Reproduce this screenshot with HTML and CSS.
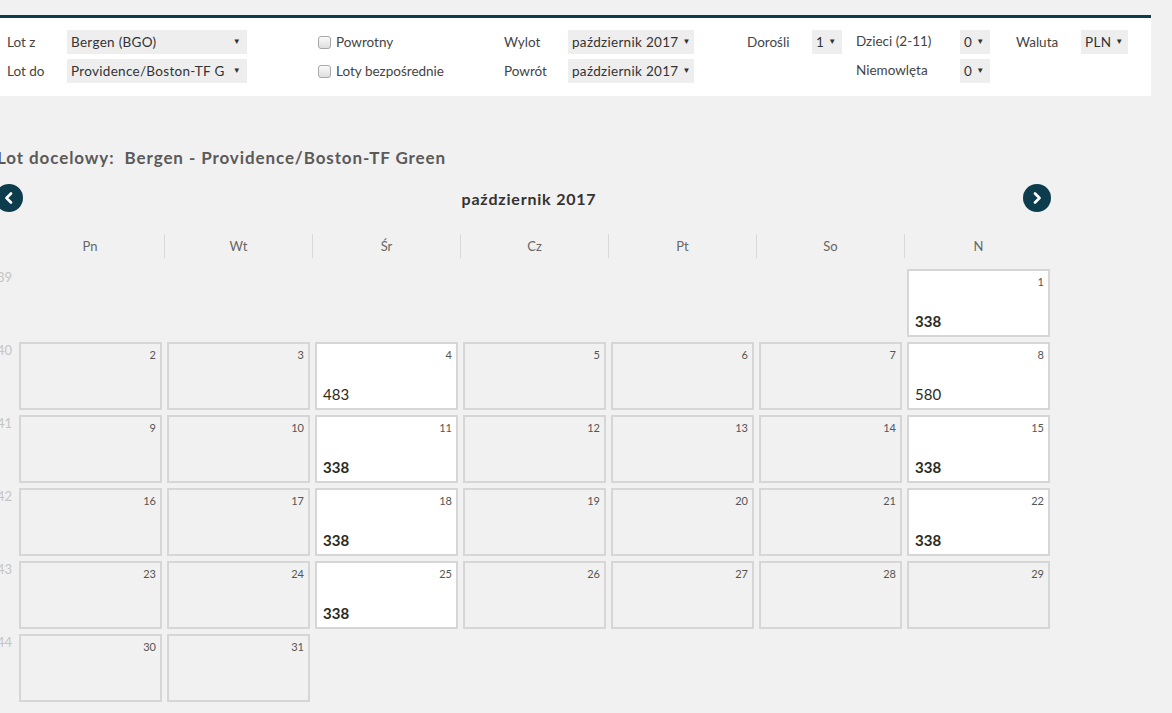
FILE: index.html
```html
<!DOCTYPE html>
<html lang="pl">
<head>
    <meta charset="UTF-8">
    <meta name="viewport" content="width=device-width, initial-scale=1.0">
    <title>Kalendarz lotów</title>
    <link rel="stylesheet" href="styles.css">
</head>
<body>
    <div class="searchbar">
        <div class="form-grid">
            <div class="lbl">Lot z</div>
            <div class="cell"><div class="sel w-from"><span>Bergen (BGO)</span><span class="caret">▼</span></div></div>
            <div class="cell"><label class="chk"><span class="box"></span>Powrotny</label></div>
            <div class="lbl">Wylot</div>
            <div class="cell"><div class="sel w-month"><span>październik 2017</span><span class="caret">▼</span></div></div>
            <div class="lbl">Dorośli</div>
            <div class="cell"><div class="sel w-num"><span>1</span><span class="caret">▼</span></div></div>
            <div class="lbl up">Dzieci (2-11)</div>
            <div class="cell"><div class="sel w-num"><span>0</span><span class="caret">▼</span></div></div>
            <div class="lbl">Waluta</div>
            <div class="cell"><div class="sel w-cur"><span>PLN</span><span class="caret">▼</span></div></div>

            <div class="lbl">Lot do</div>
            <div class="cell"><div class="sel w-from"><span>Providence/Boston-TF G</span><span class="caret">▼</span></div></div>
            <div class="cell"><label class="chk"><span class="box"></span>Loty bezpośrednie</label></div>
            <div class="lbl">Powrót</div>
            <div class="cell"><div class="sel w-month"><span>październik 2017</span><span class="caret">▼</span></div></div>
            <div class="lbl"></div>
            <div class="cell"></div>
            <div class="lbl up">Niemowlęta</div>
            <div class="cell"><div class="sel w-num"><span>0</span><span class="caret">▼</span></div></div>
            <div class="lbl"></div>
            <div class="cell"></div>
        </div>
    </div>

    <div class="calendar">
        <h2 class="route">Lot docelowy:&nbsp; Bergen - Providence/Boston-TF Green</h2>

        <div class="nav">
            <button class="arrow" aria-label="Poprzedni miesiąc">
                <svg width="12" height="12" viewBox="0 0 12 12"><path d="M8 1.5 L3.5 6 L8 10.5" fill="none" stroke="#fff" stroke-width="2.6" stroke-linecap="round" stroke-linejoin="round"/></svg>
            </button>
            <div class="month">październik 2017</div>
            <button class="arrow" aria-label="Następny miesiąc">
                <svg width="12" height="12" viewBox="0 0 12 12"><path d="M4 1.5 L8.5 6 L4 10.5" fill="none" stroke="#fff" stroke-width="2.6" stroke-linecap="round" stroke-linejoin="round"/></svg>
            </button>
        </div>

        <div class="days">
            <div>Pn</div><div>Wt</div><div>Śr</div><div>Cz</div><div>Pt</div><div>So</div><div>N</div>
        </div>

        <div class="grid" id="grid"></div>
    </div>

    <script>
        // prices for days with flights, bold = cheapest
        let prices = {
            1: ['338', true], 4: ['483', false], 8: ['580', false],
            11: ['338', true], 15: ['338', true], 18: ['338', true],
            22: ['338', true], 25: ['338', true]
        };
        let grid = document.getElementById('grid');
        let html = '';
        let day = 1;
        let offset = 6; // 1 October 2017 is a Sunday
        for (let w = 39; w <= 44; w++) {
            html += `<div class="week">${w}</div>`;
            for (let d = 0; d < 7; d++) {
                let pos = (w - 39) * 7 + d;
                if (pos < offset || day > 31) {
                    html += '<div class="empty"></div>';
                    continue;
                }
                let p = prices[day];
                let cls = p ? 'day on' : 'day';
                let price = p ? `<span class="price${p[1] ? ' best' : ''}">${p[0]}</span>` : '';
                html += `<div class="${cls}"><span class="num">${day}</span>${price}</div>`;
                day++;
            }
        }
        grid.innerHTML = html;
    </script>
</body>
</html>
```

FILE: styles.css
```css
body{
    margin: 0;
    background-color: #f1f1f1;
    font-family: Lato, "Noto Sans", sans-serif;
    color: #444;
}
.searchbar{
    margin-top: 15px;
    width: 1151px;
    background-color: #fff;
    border-top: 3px solid #0d3c4c;
    padding: 12px 0 13px 7px;
    box-sizing: border-box;
}
.form-grid{
    display: grid;
    grid-template-columns: 60px 251px 186px 64px 179px 65px 44px 104px 56px 65px auto;
    grid-template-rows: 24px 24px;
    row-gap: 5px;
    align-items: center;
}
.lbl{
    font-size: 13.5px;
    color: #444;
}
.lbl.up{
    align-self: start;
    padding-top: 3px;
}
.sel{
    display: flex;
    align-items: center;
    justify-content: space-between;
    height: 24px;
    padding: 0 6px 0 4px;
    box-sizing: border-box;
    background-color: #eee;
    font-size: 13.5px;
    letter-spacing: 0.3px;
    color: #333;
    white-space: nowrap;
    overflow: hidden;
}
.caret{
    font-size: 8px;
    margin-left: 4px;
    position: relative;
    top: -1px;
}
.w-from{ width: 180px; }
.w-month{ width: 126px; }
.w-num{ width: 30px; }
.w-cur{ width: 47px; }
.chk{
    display: flex;
    align-items: center;
    font-size: 13.5px;
    color: #444;
}
.box{
    width: 11px;
    height: 11px;
    margin-right: 5px;
    border: 1px solid #a8a8a8;
    border-radius: 3px;
    background: linear-gradient(#fafafa, #dedede);
}

.calendar{
    margin-left: -10px;
    width: 1066px;
}
.route{
    margin: 51px 0 0 7px;
    font-size: 17px;
    font-weight: 700;
    color: #5a5a5a;
    letter-spacing: 0.9px;
}
.nav{
    display: flex;
    align-items: center;
    justify-content: space-between;
    width: 1056px;
    margin: 16px 0 0 5px;
}
.arrow{
    width: 28px;
    height: 28px;
    border: 0;
    border-radius: 50%;
    padding: 0;
    background-color: #0d3c4c;
    display: flex;
    align-items: center;
    justify-content: center;
    cursor: pointer;
}
.month{
    flex: 1;
    text-align: center;
    padding-left: 12px;
    font-size: 16px;
    font-weight: 700;
    letter-spacing: 0.8px;
    color: #333;
}
.days{
    display: flex;
    margin: 22px 0 0 26px;
}
.days div{
    width: 148px;
    height: 24px;
    line-height: 24px;
    text-align: center;
    font-size: 13px;
    color: #666;
    box-sizing: border-box;
}
.days div + div{
    border-left: 1px solid #d8d8d8;
}
.grid{
    display: grid;
    grid-template-columns: 24px repeat(7, 143px);
    grid-auto-rows: 68px;
    column-gap: 5px;
    row-gap: 5px;
    margin-top: 11px;
}
.week{
    text-align: right;
    padding: 0 2px 0 0;
    font-size: 13px;
    color: #c4c4c4;
}
.day{
    position: relative;
    border: 2px solid #d6d6d6;
    box-sizing: border-box;
    display: flex;
    flex-direction: column;
    justify-content: space-between;
}
.day.on{
    background-color: #fff;
}
.num{
    align-self: flex-end;
    padding: 4px 4px 0 0;
    font-size: 11px;
    color: #555;
}
.price{
    padding: 0 0 5px 6px;
    font-size: 15px;
    color: #2b2b22;
}
.price.best{
    font-weight: 700;
}
```
